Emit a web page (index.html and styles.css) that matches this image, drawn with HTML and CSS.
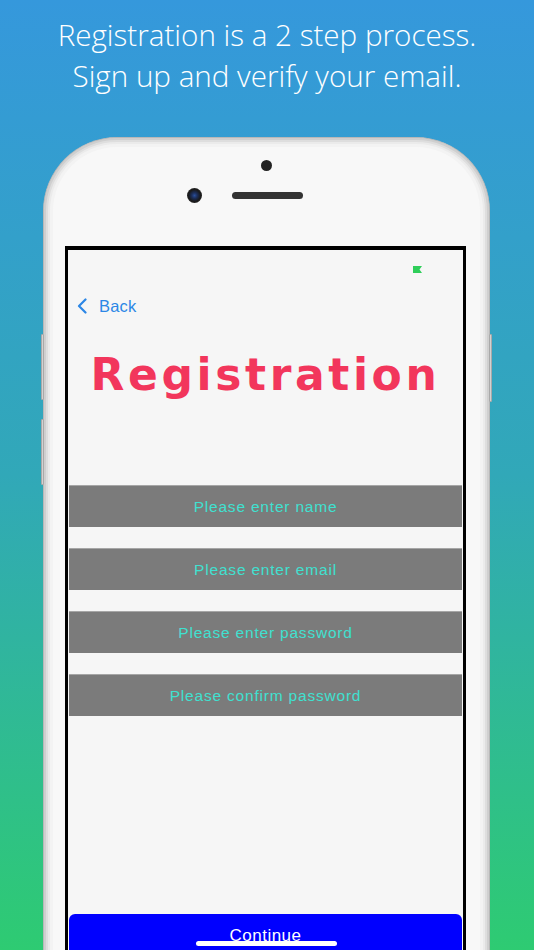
FILE: index.html
```html
<!DOCTYPE html>
<html lang="en">
<head>
<meta charset="utf-8">
<title>Registration</title>
<link rel="stylesheet" href="styles.css">
</head>
<body>
<div class="page">
  <h1 class="headline">Registration is a 2 step process.<br>Sign up and verify your email.</h1>
  <div class="phone">
    <span class="side-btn side-left-1"></span>
    <span class="side-btn side-left-2"></span>
    <span class="side-btn side-right"></span>
    <div class="phone-top">
      <span class="sensor"></span>
      <div class="cam-row">
        <span class="camera"></span>
        <span class="speaker"></span>
      </div>
    </div>
    <div class="screen">
      <div class="status">
        <svg class="battery" width="9" height="7" viewBox="0 0 9 7"><path d="M0 0H9L6.5 3.5L9 7H0Z" fill="#2fce5a"/></svg>
      </div>
      <div class="nav">
        <svg class="chevron" width="10" height="16" viewBox="0 0 10 16"><path d="M8.5 1.5L2 8L8.5 14.5" fill="none" stroke="#2c87e6" stroke-width="2.2" stroke-linecap="round" stroke-linejoin="round"/></svg>
        <span class="back">Back</span>
      </div>
      <h2 class="title">Registration</h2>
      <div class="fields">
        <div class="field">Please enter name</div>
        <div class="field">Please enter email</div>
        <div class="field">Please enter password</div>
        <div class="field">Please confirm password</div>
      </div>
      <div class="continue">
        <span class="continue-label">Continue</span>
        <span class="home-indicator"></span>
      </div>
    </div>
  </div>
</div>
</body>
</html>
```
FILE: styles.css
```css
* { box-sizing: border-box; }
html, body { margin: 0; padding: 0; }
body {
  width: 534px;
  height: 950px;
  overflow: hidden;
  background: linear-gradient(180deg, #3598dc 0%, #31a8b8 50%, #2ecb72 100%);
  font-family: "Liberation Sans", Arial, sans-serif;
}
.page { width: 534px; height: 950px; overflow: hidden; }
.headline {
  margin: 0;
  padding-top: 14px;
  font-family: "Open Sans", sans-serif;
  font-weight: 300;
  font-size: 29.6px;
  line-height: 41px;
  color: #ffffff;
  text-align: center;
}
.phone {
  position: relative;
  margin-top: 41px;
  margin-left: 43px;
  width: 447px;
  height: 840px;
  padding: 0 23px 0 21px;
  background: #f8f8f8;
  border: 1px solid #b8b8b8;
  border-bottom: 0;
  border-radius: 74px 74px 0 0;
  box-shadow: inset 0 0 0 2px #cfcfcf, inset 0 0 0 4px #dedede, inset 0 0 0 6px #ebebeb, inset 0 0 0 9px #f3f3f3;
}
.side-btn {
  position: absolute;
  width: 3px;
  background: #d2d2d2;
  border: 1px solid #a9a9a9;
  border-radius: 1px;
}
.side-left-1 { left: -3px; top: 196px; height: 66px; }
.side-left-2 { left: -3px; top: 281px; height: 66px; }
.side-right { right: -3px; top: 196px; height: 68px; }
.phone-top {
  height: 108px;
  display: flex;
  flex-direction: column;
  align-items: flex-start;
}
.sensor {
  margin-top: 22px;
  margin-left: 196px;
  width: 11px;
  height: 11px;
  border-radius: 50%;
  background: #232323;
}
.cam-row {
  margin-top: 17px;
  margin-left: 122px;
  display: flex;
  align-items: center;
  gap: 30px;
}
.camera {
  width: 15px;
  height: 15px;
  border-radius: 50%;
  background: radial-gradient(circle at 50% 50%, #2a4f9a 0, #1c2f5c 25%, #1a1a1a 55%, #3a3a3a 100%);
}
.speaker {
  width: 71px;
  height: 7px;
  border-radius: 4px;
  background: #333333;
}
.screen {
  height: 713px;
  background: #f6f6f6;
  border: 3px solid #000000;
  border-top-width: 4px;
  border-bottom: 0;
  display: flex;
  flex-direction: column;
}
.status {
  height: 36px;
  padding-top: 16px;
  padding-right: 41px;
  display: flex;
  justify-content: flex-end;
  align-items: flex-start;
}
.battery { display: block; }
.nav {
  height: 40px;
  padding-left: 9px;
  display: flex;
  align-items: center;
  gap: 12px;
}
.chevron { display: block; }
.back {
  font-size: 16.5px;
  color: #2c87e6;
  letter-spacing: 0.2px;
}
.title {
  margin: 23px 0 0;
  font-family: "DejaVu Sans", Verdana, sans-serif;
  font-weight: bold;
  font-size: 44px;
  line-height: 52px;
  letter-spacing: 3.6px;
  color: #f2365c;
  text-align: center;
}
.fields {
  margin-top: 84px;
  display: flex;
  flex-direction: column;
  gap: 21px;
  padding: 0 1px;
}
.field {
  height: 42px;
  background: #7b7b7b;
  border-top: 1px solid #a6a6a6;
  display: flex;
  align-items: center;
  justify-content: center;
  font-size: 15.5px;
  letter-spacing: 0.8px;
  color: #40e0d0;
}
.continue {
  position: relative;
  margin: auto 1px 0;
  height: 45px;
  padding-top: 12px;
  background: #0000ff;
  border-radius: 6px 6px 0 0;
  text-align: center;
}
.continue-label {
  font-size: 17px;
  line-height: 19px;
  letter-spacing: 0.5px;
  color: #ffffff;
}
.home-indicator {
  position: absolute;
  left: 50%;
  top: 27px;
  width: 141px;
  height: 5px;
  margin-left: -70px;
  border-radius: 3px;
  background: #ffffff;
}
```
